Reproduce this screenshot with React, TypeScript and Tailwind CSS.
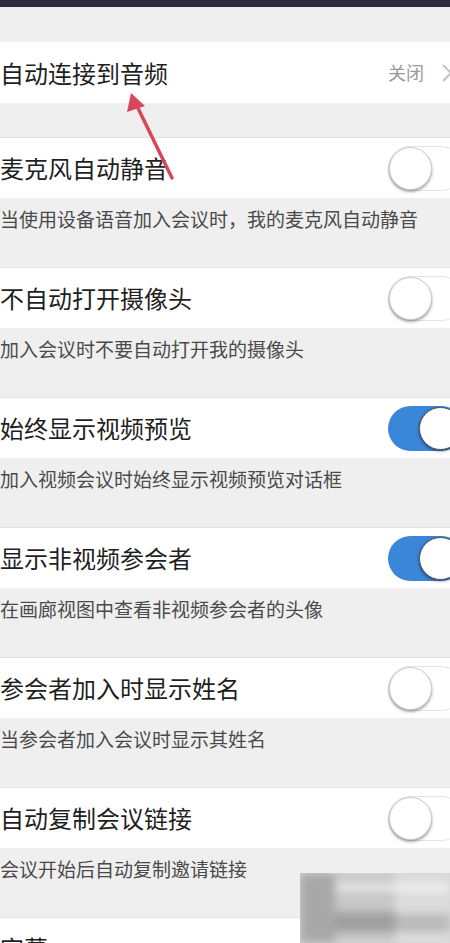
import React from "react";

const font = { fontFamily: '"Noto Sans CJK SC", "Noto Sans", sans-serif' };

function Toggle({ on }: { on: boolean }) {
  return (
    <div
      className={
        on
          ? "shrink-0 -mr-[14px] flex h-[45px] w-[76px] items-center justify-end rounded-full bg-[#3a86d9] px-[2px]"
          : "shrink-0 -mr-[14px] flex h-[45px] w-[76px] items-center justify-start rounded-full border border-[#e4e4e6] bg-white"
      }
    >
      <div
        className={
          on
            ? "h-[43px] w-[43px] rounded-full border border-[#555] bg-white shadow-[0_1px_3px_rgba(0,0,0,0.55)]"
            : "h-[43px] w-[43px] rounded-full border border-[#c9c9c9] bg-white shadow-[0_2px_3px_rgba(0,0,0,0.35)]"
        }
      />
    </div>
  );
}

function SettingRow({ title, desc, on }: { title: string; desc: string; on: boolean }) {
  return (
    <div className="flex flex-col">
      <div className="flex h-[60px] items-center justify-between bg-white">
        <span className="whitespace-nowrap text-[24px] leading-none text-[#1f1f1f]">{title}</span>
        <Toggle on={on} />
      </div>
      <div className="h-[70px] border-b border-[#e2e2e4] bg-[#efeff0] pt-[8px]">
        <span className="whitespace-nowrap text-[19px] leading-[26px] text-[#4a4a4a]">{desc}</span>
      </div>
    </div>
  );
}

const rows = [
  { title: "麦克风自动静音", desc: "当使用设备语音加入会议时，我的麦克风自动静音", on: false },
  { title: "不自动打开摄像头", desc: "加入会议时不要自动打开我的摄像头", on: false },
  { title: "始终显示视频预览", desc: "加入视频会议时始终显示视频预览对话框", on: true },
  { title: "显示非视频参会者", desc: "在画廊视图中查看非视频参会者的头像", on: true },
  { title: "参会者加入时显示姓名", desc: "当参会者加入会议时显示其姓名", on: false },
  { title: "自动复制会议链接", desc: "会议开始后自动复制邀请链接", on: false },
];

export default function App() {
  return (
    <div className="relative flex h-[943px] w-[450px] flex-col overflow-hidden bg-[#efeff0]" style={font}>
      <div className="h-[7px] shrink-0 bg-[#2d2a3d]" />
      <div className="h-[35px] shrink-0" />
      <div className="flex h-[61px] shrink-0 items-center justify-between bg-white">
        <span className="whitespace-nowrap text-[24px] leading-none text-[#1f1f1f]">自动连接到音频</span>
        <div className="-mr-[4px] flex items-center gap-[16px]">
          <span className="text-[18px] text-[#9a9a9a]">关闭</span>
          <svg width="14" height="22" viewBox="0 0 14 22">
            <path d="M3 3 L11 11 L3 19" fill="none" stroke="#c4c4c8" strokeWidth="2" />
          </svg>
        </div>
      </div>
      <div className="h-[35px] shrink-0 border-b border-[#e2e2e4]" />
      {rows.map((r) => (
        <SettingRow key={r.title} {...r} />
      ))}
      <div className="flex h-[60px] shrink-0 items-center bg-white">
        <span className="whitespace-nowrap text-[24px] leading-none text-[#1f1f1f]">字幕</span>
      </div>

      {/* red arrow annotation */}
      <svg className="absolute left-0 top-0" width="450" height="943" viewBox="0 0 450 943">
        <line x1="172" y1="178" x2="136" y2="104" stroke="#d8465a" strokeWidth="3.5" strokeLinecap="round" />
        <polygon points="131,93 127,112 145,106" fill="#d8465a" />
      </svg>

      {/* blurred watermark */}
      <div className="absolute left-[300px] top-[873px] h-[70px] w-[150px] overflow-hidden bg-[#d8d8d8]">
        <div className="flex h-full w-full blur-[4px]">
          <div className="h-full w-[35px] bg-[#a8a8a8]" />
          <div className="flex h-full w-[60px] flex-col justify-around bg-[#c8c8c8]">
            <div className="h-[6px] bg-[#f0f0f0]" />
            <div className="h-[20px] bg-[#a0a0a0]" />
          </div>
          <div className="flex h-full w-[55px] flex-col justify-around bg-[#dcdcdc]">
            <div className="h-[6px] bg-[#f4f4f4]" />
            <div className="h-[18px] bg-[#bababa]" />
          </div>
        </div>
      </div>
    </div>
  );
}
